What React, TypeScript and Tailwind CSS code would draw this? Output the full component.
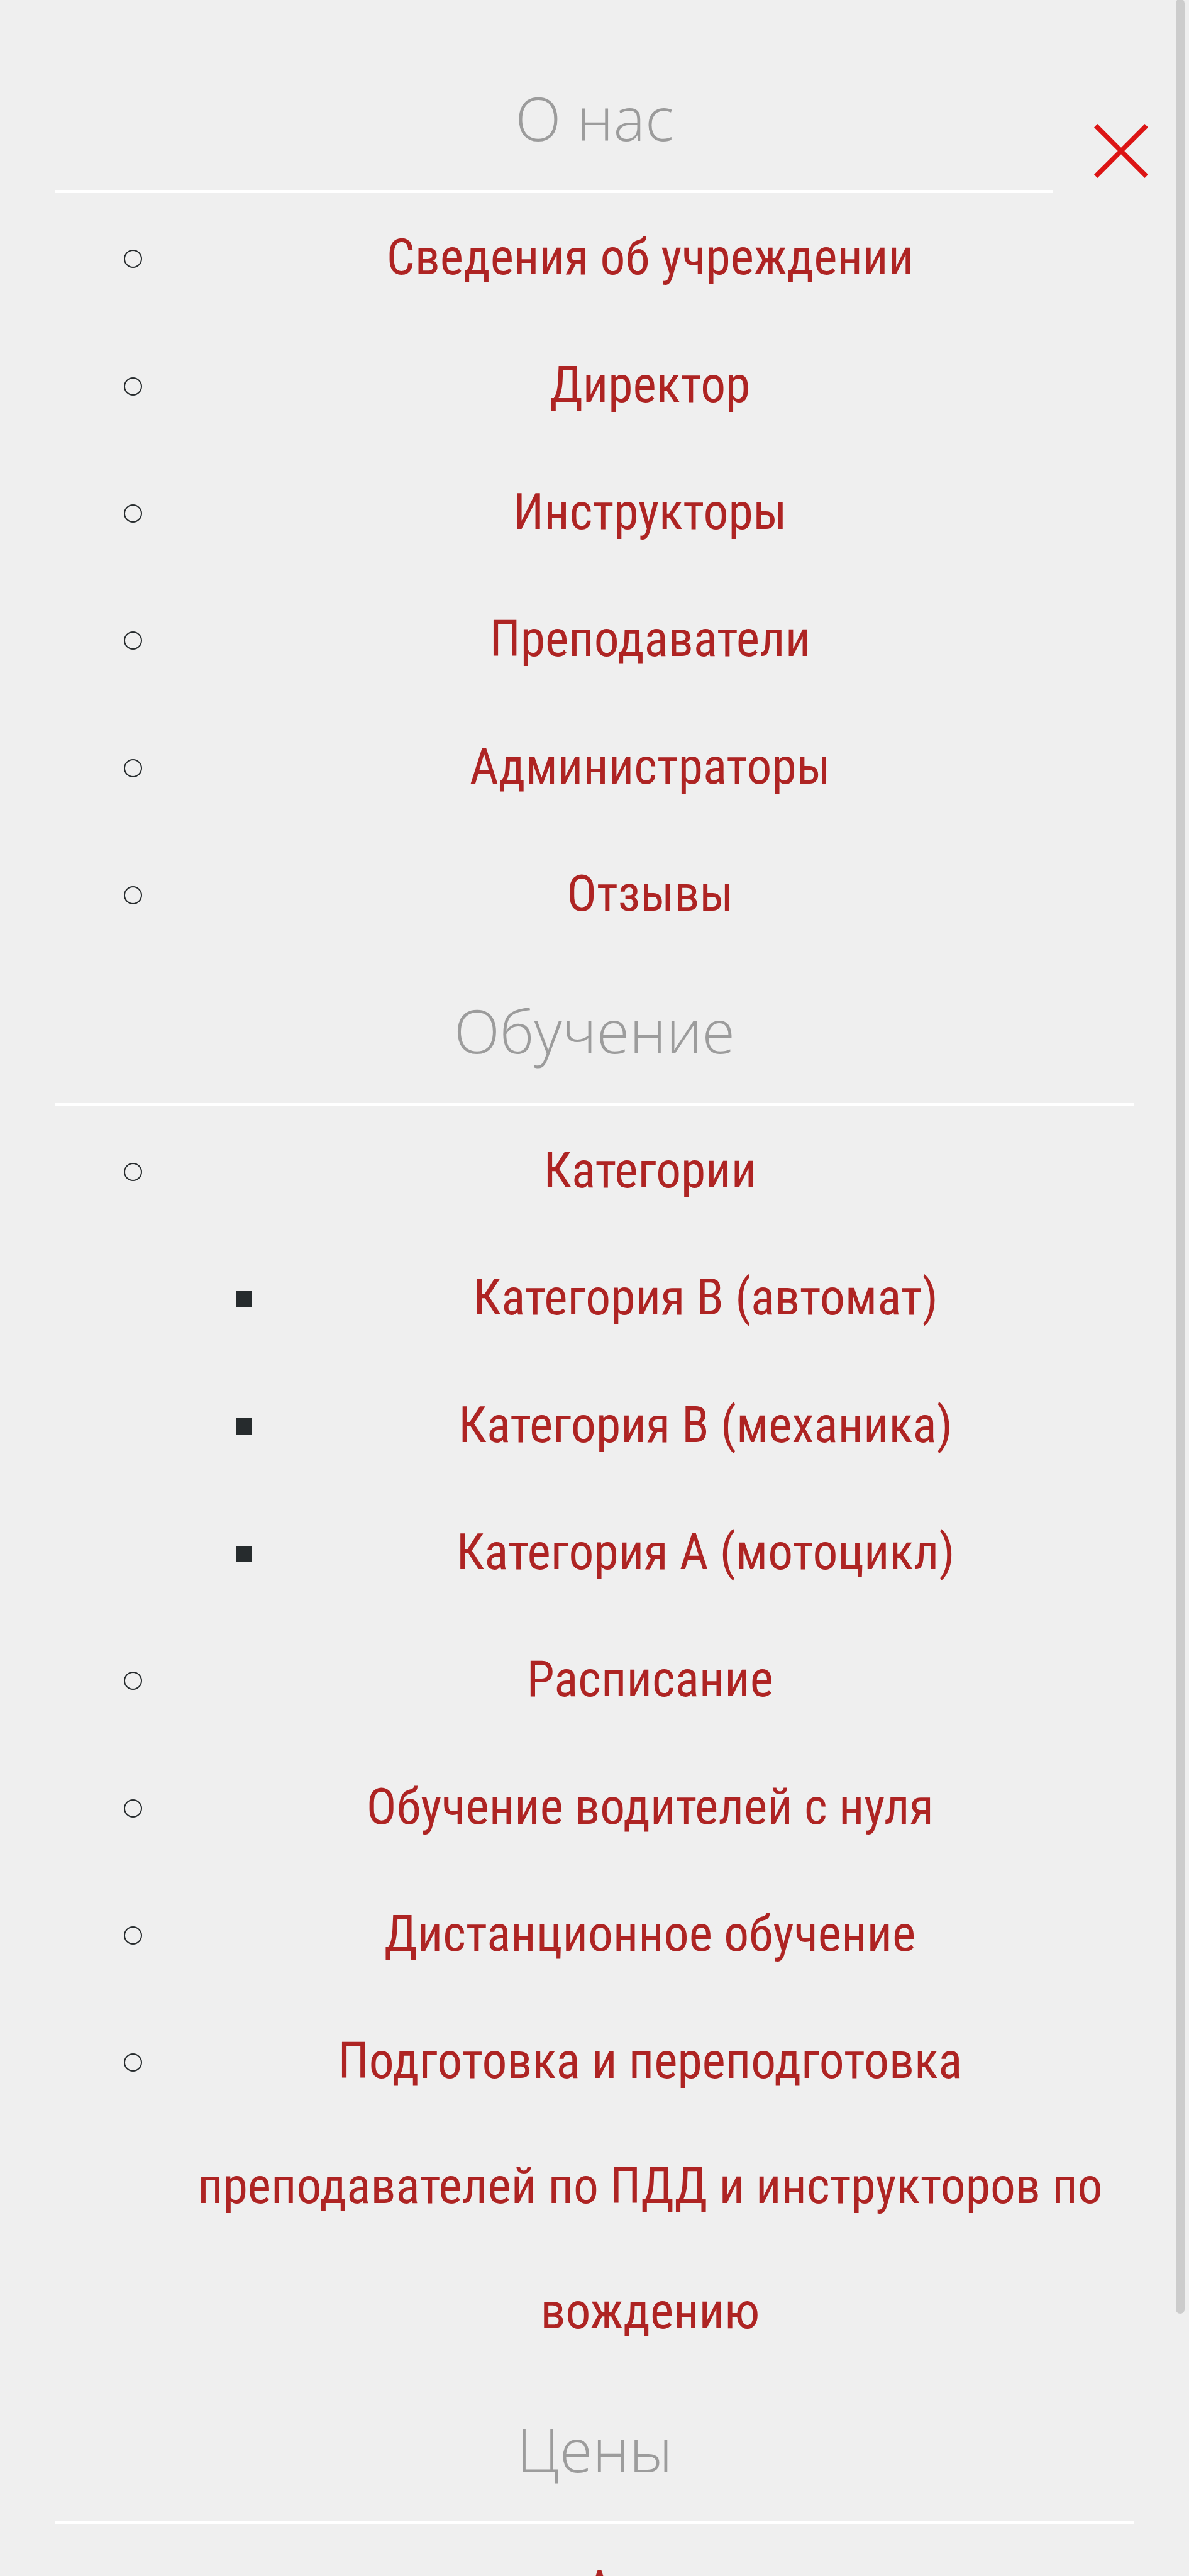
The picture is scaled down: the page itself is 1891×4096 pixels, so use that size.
import clsx from "clsx";

type Item = { title: string; children?: string[] };

const sections: { title: string; items: Item[] }[] = [
  {
    title: "О нас",
    items: [
      { title: "Сведения об учреждении" },
      { title: "Директор" },
      { title: "Инструкторы" },
      { title: "Преподаватели" },
      { title: "Администраторы" },
      { title: "Отзывы" },
    ],
  },
  {
    title: "Обучение",
    items: [
      {
        title: "Категории",
        children: ["Категория B (автомат)", "Категория B (механика)", "Категория A (мотоцикл)"],
      },
      { title: "Расписание" },
      { title: "Обучение водителей с нуля" },
      { title: "Дистанционное обучение" },
      { title: "Подготовка и переподготовка преподавателей по ПДД и инструкторов по вождению" },
    ],
  },
  {
    title: "Цены",
    items: [{ title: "Акции" }],
  },
];

const MenuRow = ({ title, nested = false }: { title: string; nested?: boolean }) => (
  <div className="flex items-start pt-[3.5px]">
    <span
      className={clsx(
        "flex h-[198.85px] shrink-0 items-center",
        nested ? "w-[353.4px] pl-[287px]" : "w-[176.7px] pl-[108.5px]"
      )}
    >
      {nested ? (
        <span className="mt-[4px] h-[26px] w-[26px] bg-[#262b2d]" />
      ) : (
        <span className="mt-[4px] h-[29px] w-[29px] rounded-full border-[2px] border-[#262b2d]" />
      )}
    </span>
    <a
      href="#"
      className="block min-w-0 flex-1 text-center font-['Roboto_Condensed','Roboto',sans-serif] text-[79.5px] leading-[198.85px] font-normal text-[#ae2423] [font-stretch:75%]"
    >
      {title}
    </a>
  </div>
);

const CloseButton = () => (
  <button
    aria-label="Закрыть"
    className="absolute top-[172px] left-[1674px] flex h-[135px] w-[136px] items-center justify-center bg-[#efefef] pl-[81px]"
  >
    <svg viewBox="0 0 86 86" className="h-[86px] w-[86px] shrink-0" stroke="#dc1414" strokeWidth="7.6">
      <path d="M2.7 2.7 83.3 83.3M83.3 2.7 2.7 83.3" />
    </svg>
  </button>
);

const App = () => (
  <div className="relative h-[4096px] w-[1891px] overflow-hidden bg-[#efefef]">
    <nav className="px-[88.4px] pt-[70px]">
      {sections.map((section) => (
        <section key={section.title} className="pb-[0.8px] nth-2:pb-[2.6px]">
          <h2 className="border-b-[5px] border-white pt-[17.5px] pb-[15.5px] text-center font-['Open_Sans',sans-serif] text-[95.4px] leading-[198.85px] font-light text-[#9c9c9c]">
            {section.title}
          </h2>
          <ul>
            {section.items.map((item) => (
              <li key={item.title}>
                <MenuRow title={item.title} />
                {item.children && (
                  <ul>
                    {item.children.map((child) => (
                      <li key={child}>
                        <MenuRow title={child} nested />
                      </li>
                    ))}
                  </ul>
                )}
              </li>
            ))}
          </ul>
        </section>
      ))}
    </nav>

    <CloseButton />

    {/* Scrollbar thumb */}
    <div className="absolute top-[-2px] left-[1870px] h-[3681px] w-[14px] rounded-full bg-[#cccccc]" />
  </div>
);

export default App;
